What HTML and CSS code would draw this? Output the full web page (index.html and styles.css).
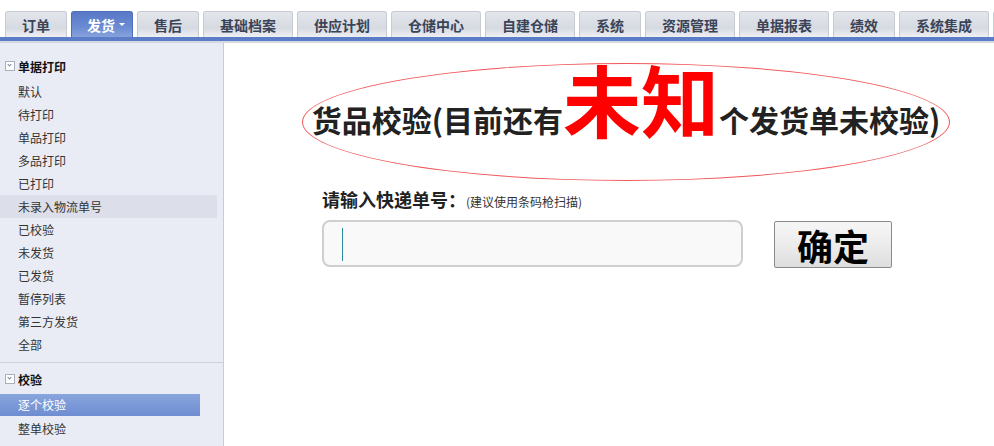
FILE: index.html
```html
<!DOCTYPE html>
<html lang="zh-CN">

<head>
  <meta charset="UTF-8">
  <meta name="viewport" content="width=device-width, initial-scale=1.0">
  <title>货品校验</title>
  <link rel="stylesheet" href="styles.css">
</head>

<body>
  <nav class="tabs">
    <a class="tab">订单</a>
    <a class="tab active">发货<span class="arrow"></span></a>
    <a class="tab">售后</a>
    <a class="tab wide">基础档案</a>
    <a class="tab wide">供应计划</a>
    <a class="tab wide">仓储中心</a>
    <a class="tab wide">自建仓储</a>
    <a class="tab">系统</a>
    <a class="tab wide">资源管理</a>
    <a class="tab wide">单据报表</a>
    <a class="tab">绩效</a>
    <a class="tab wide">系统集成</a>
    <a class="tab"></a>
  </nav>

  <section class="wrap">
    <aside class="side">
      <div class="group">
        <h3 class="group-title"><span class="toggle"></span>单据打印</h3>
        <ul class="menu">
          <li>默认</li>
          <li>待打印</li>
          <li>单品打印</li>
          <li>多品打印</li>
          <li>已打印</li>
          <li class="hover">未录入物流单号</li>
          <li>已校验</li>
          <li>未发货</li>
          <li>已发货</li>
          <li>暂停列表</li>
          <li>第三方发货</li>
          <li>全部</li>
        </ul>
      </div>
      <div class="group second">
        <h3 class="group-title"><span class="toggle"></span>校验</h3>
        <ul class="menu">
          <li class="current">逐个校验</li>
          <li>整单校验</li>
        </ul>
      </div>
    </aside>

    <main class="main">
      <div class="banner">
        <h1 class="title">货品校验(目前还有<span class="count">未知</span>个发货单未校验)</h1>
      </div>

      <div class="scan">
        <p class="label">请输入快递单号：<small>(建议使用条码枪扫描)</small></p>
        <div class="row">
          <div class="field">
            <input class="input" type="text">
            <span class="caret"></span>
          </div>
          <button class="ok">确定</button>
        </div>
      </div>
    </main>
  </section>
</body>

</html>
```

FILE: styles.css
```css
*,
*::after,
*::before {
  box-sizing: border-box;
}

body {
  margin: 0;
  height: 100vh;
  overflow: hidden;
  font-family: "Noto Sans CJK SC", "Noto Sans", sans-serif;
  color: #333;
  background: #fff;
}

/* barra de pestañas */
.tabs {
  display: flex;
  gap: 4px;
  height: 43px;
  padding: 11px 0 0 5px;
  white-space: nowrap;
  overflow: hidden;
  border-bottom: 2px solid #d3d8e3;
  box-shadow: inset 0 -4px 0 #5b7dc8;
}

.tab {
  flex: none;
  display: flex;
  align-items: center;
  justify-content: center;
  width: 62px;
  height: 26px;
  font-size: 14px;
  font-weight: 700;
  line-height: 1;
  color: #3a4358;
  border: 1px solid #c6cbd4;
  border-bottom: none;
  border-radius: 3px 3px 0 0;
  background: linear-gradient(#e3e6eb, #d6dae1 65%, #eef0f3);
}

.tab.wide {
  width: 90px;
}

.tab.active {
  padding-left: 8px;
  color: #fff;
  border-color: #4c6dbb;
  background: linear-gradient(#5878c6, #6b8cd3 60%, #86a1dc);
}

.arrow {
  margin-left: 4px;
  border: 3px solid transparent;
  border-top: 3px solid #fff;
  border-bottom: none;
  width: 0;
  height: 0;
}

/* cuerpo */
.wrap {
  display: flex;
  height: calc(100vh - 43px);
}

.side {
  flex: 0 0 224px;
  padding-top: 12px;
  background: #e9ecf5;
  border-right: 1px solid #c8ccd4;
}

.group-title {
  display: flex;
  align-items: center;
  height: 22px;
  margin: 0;
  padding-left: 5px;
  font-size: 12px;
  font-weight: 700;
  color: #111;
}

.toggle {
  position: relative;
  width: 10px;
  height: 10px;
  margin-right: 3px;
  border: 1px solid #a9b0bd;
  background: #fff;
}

.toggle::after {
  content: "";
  position: absolute;
  left: 2px;
  top: 1px;
  width: 3px;
  height: 3px;
  border-right: 1px solid #7a8290;
  border-bottom: 1px solid #7a8290;
  transform: rotate(45deg);
}

.menu {
  list-style: none;
  margin: 3px 0 0;
  padding: 0;
}

.menu li {
  height: 23px;
  line-height: 23px;
  padding-left: 18px;
  font-size: 12px;
  color: #333;
}

.menu li.hover {
  width: 217px;
  background: #dcdfea;
}

.menu li.current {
  width: 200px;
  height: 22px;
  margin-bottom: 1px;
  line-height: 22px;
  color: #fff;
  background: linear-gradient(#89a5dd, #6e8dd1);
}

.second {
  margin-top: 6px;
  padding-top: 5px;
  border-top: 1px solid #cdd1da;
}

.second .menu {
  margin-top: 4px;
}

/* contenido */
.main {
  flex: 1;
  padding: 20px 0 0 78px;
}

.banner {
  display: flex;
  justify-content: center;
  align-items: center;
  width: 648px;
  height: 118px;
  border: 1px solid #f0585a;
  border-radius: 50%;
}

.title {
  margin: -48px 0 0;
  font-size: 30px;
  font-weight: 700;
  line-height: 1;
  color: #222;
  white-space: nowrap;
}

.count {
  font-size: 78px;
  color: #f00;
}

.scan {
  margin: 5px 0 0 20px;
}

.label {
  margin: 0;
  font-size: 18px;
  font-weight: 700;
  color: #222;
}

.label small {
  font-size: 12px;
  font-weight: 400;
  color: #333;
}

.row {
  display: flex;
  align-items: flex-start;
  gap: 31px;
  margin-top: 8px;
}

.field {
  position: relative;
}

.input {
  display: block;
  width: 421px;
  height: 47px;
  border: 2px solid #cfcfcf;
  border-radius: 8px;
  background: #f9f9f9;
  outline: none;
}

.caret {
  position: absolute;
  left: 20px;
  top: 8px;
  width: 1px;
  height: 33px;
  background: #2a8aa0;
}

.ok {
  width: 118px;
  height: 47px;
  margin-top: 1px;
  padding: 0;
  font-family: inherit;
  font-size: 36px;
  font-weight: 700;
  line-height: 1;
  color: #000;
  border: 1px solid #8a8a8a;
  border-radius: 2px;
  background: linear-gradient(#f6f6f6, #ececec 50%, #dedede);
}
```
